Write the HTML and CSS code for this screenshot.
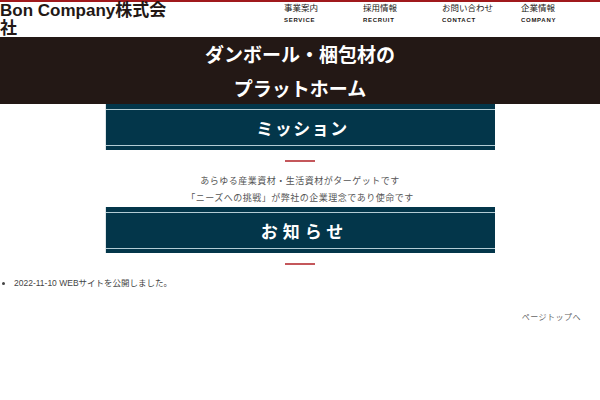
FILE: index.html
```html
<!DOCTYPE html>
<html lang="ja">
<head>
<meta charset="utf-8">
<title>Bon Company株式会社</title>
<link rel="stylesheet" href="styles.css">
</head>
<body>
<header class="site-header">
  <h1 class="logo">Bon Company株式会社</h1>
  <nav class="gnav">
    <ul>
      <li><span class="ja">事業案内</span><span class="en">SERVICE</span></li>
      <li><span class="ja">採用情報</span><span class="en">RECRUIT</span></li>
      <li><span class="ja">お問い合わせ</span><span class="en">CONTACT</span></li>
      <li><span class="ja">企業情報</span><span class="en">COMPANY</span></li>
    </ul>
  </nav>
</header>
<section class="hero">
  <p>ダンボール・梱包材の<br>プラットホーム</p>
</section>
<section class="block">
  <h2 class="banner"><span class="banner-inner mission">ミッション</span></h2>
  <div class="accent"></div>
  <p class="lead">あらゆる産業資材・生活資材がターゲットです<br>「ニーズへの挑戦」が弊社の企業理念であり使命です</p>
</section>
<section class="block block-news">
  <h2 class="banner"><span class="banner-inner news-title">お知らせ</span></h2>
  <div class="accent"></div>
</section>
<ul class="news">
  <li>2022-11-10 WEBサイトを公開しました。</li>
</ul>
<p class="pagetop">ページトップへ</p>
</body>
</html>
```
FILE: styles.css
```css
html, body {
  margin: 0;
  padding: 0;
  background: #ffffff;
}
body {
  font-family: "Liberation Sans", "Noto Sans CJK JP", sans-serif;
  color: #231815;
}
.site-header {
  display: flex;
  align-items: flex-start;
  height: 35px;
  border-top: 2px solid #a0191c;
}
.logo {
  margin: 0;
  width: 175px;
  font-size: 17px;
  line-height: 17.5px;
  font-weight: bold;
  color: #231815;
}
.gnav {
  margin-left: auto;
}
.gnav ul {
  display: flex;
  margin: 0;
  padding: 0;
  list-style: none;
}
.gnav li {
  width: 79px;
  display: flex;
  flex-direction: column;
}
.gnav .ja {
  font-size: 8.5px;
  line-height: 12px;
  color: #231815;
}
.gnav .en {
  font-size: 6px;
  line-height: 12px;
  font-weight: bold;
  letter-spacing: 0.7px;
  color: #231815;
}
.hero {
  background: #231815;
  height: 67px;
}
.hero p {
  margin: 0;
  text-align: center;
  color: #ffffff;
  font-family: "Noto Sans CJK JP", sans-serif;
  font-weight: bold;
  font-size: 19px;
  line-height: 34px;
}
.block {
  display: flex;
  flex-direction: column;
  align-items: center;
}
.block-news {
  margin-top: 1px;
}
.banner {
  margin: 0;
  width: 390px;
  box-sizing: border-box;
  padding: 5px 0 4px;
  background: #03364a;
  border-left: 1px solid #dfe5e8;
}
.banner-inner {
  display: block;
  height: 35px;
  border-top: 1px solid #b3ccd4;
  border-bottom: 1px solid #b3ccd4;
  text-align: center;
  color: #ffffff;
  font-family: "Noto Sans CJK JP", sans-serif;
  font-weight: bold;
  font-size: 17px;
  line-height: 35px;
}
.mission {
  letter-spacing: 1.5px;
  padding-left: 4px;
}
.news-title {
  letter-spacing: 5px;
  padding-left: 8px;
}
.accent {
  width: 30px;
  height: 2px;
  margin-top: 10px;
  background: #c4575b;
}
.lead {
  margin: 10px 0 0;
  text-align: center;
  font-family: "Noto Sans CJK JP", sans-serif;
  font-size: 9px;
  line-height: 17px;
  letter-spacing: 0.5px;
  color: #555555;
}
.news {
  margin: 12px 0 0;
  padding-left: 14px;
  font-size: 8.5px;
  line-height: 12px;
  color: #444444;
}
.pagetop {
  margin: 22px 19px 0 0;
  text-align: right;
  font-family: "Noto Sans CJK JP", sans-serif;
  font-size: 8px;
  line-height: 12px;
  letter-spacing: 0.5px;
  color: #666666;
}
```
